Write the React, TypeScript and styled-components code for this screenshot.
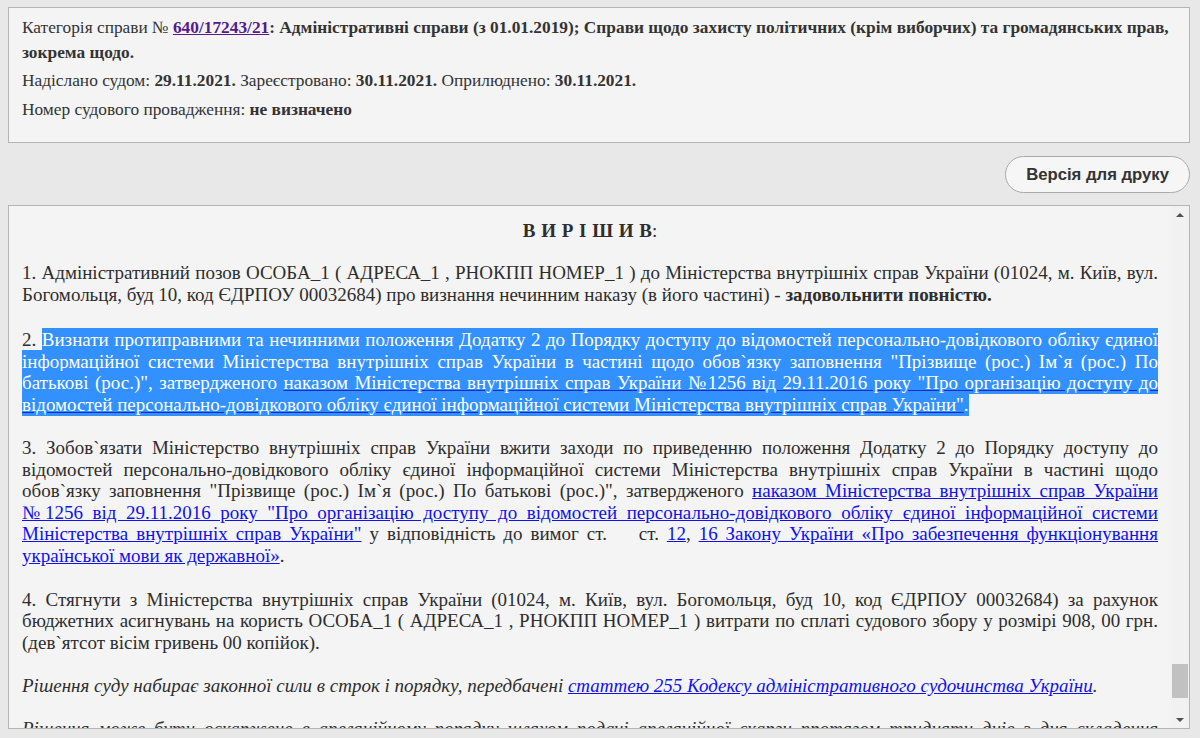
import React from 'react';
import styled, { createGlobalStyle } from 'styled-components';

const SERIF = "'Liberation Serif', 'Times New Roman', serif";
const SANS = "'Liberation Sans', Arial, sans-serif";

const GlobalStyle = createGlobalStyle`
  body {
    margin: 0;
    background: #e8e8e8;
  }
`;

const Page = styled.div`
  height: 738px;
  overflow: hidden;
  padding: 7px 10px 0 8px;
  box-sizing: border-box;
  font-family: ${() => SERIF};
  color: #333;
`;

const InfoBox = styled.div`
  height: 136px;
  box-sizing: border-box;
  border: 1px solid #b4b4b4;
  background: #f4f4f4;
  padding: 7px 13px 0 13px;
  font-family: ${() => SERIF};
  font-size: 17.33px;
`;

const InfoRow = styled.div<{ $gap?: number }>`
  line-height: 25px;
  margin-top: ${p => p.$gap || 0}px;
`;

const CaseLink = styled.a`
  color: #551a8b;
  text-decoration: underline;
  font-weight: bold;
`;

const Toolbar = styled.div`
  display: flex;
  justify-content: flex-end;
  margin: 13px 0 12px;
`;

const PrintButton = styled.button`
  height: 37px;
  padding: 0 20px;
  border: 1px solid #aaa;
  border-radius: 19px;
  background: #f6f6f6;
  color: #333;
  font-family: ${() => SANS};
  font-weight: bold;
  font-size: 16.7px;
  cursor: pointer;
`;

const DocBox = styled.div`
  height: 524px;
  box-sizing: border-box;
  border: 1px solid #b4b4b4;
  background: #f4f4f4;
  display: flex;
`;

const DocContent = styled.div`
  flex: 1;
  overflow: hidden;
  padding: 14px 13px 0 13px;
  font-family: ${() => SERIF};
  font-size: 19px;
  line-height: 21.6px;
  color: #2e2e2e;
`;

const Heading = styled.div`
  text-align: center;
  margin: 0 0 20.4px;
  word-spacing: 1px;
`;

const Para = styled.p<{ $italic?: boolean; $after?: number }>`
  margin: 0 0 ${p => p.$after || 21.6}px;
  text-align: justify;
  font-style: ${p => (p.$italic ? 'italic' : 'normal')};
`;

const Link = styled.a`
  color: #1010f0;
  text-decoration: underline;
`;

const Selected = styled.span`
  background: #3390ff;
  color: #fff;
  padding: 1px 0;
  box-decoration-break: clone;
  -webkit-box-decoration-break: clone;
  a {
    color: #fff;
    text-decoration-color: #1a2ad0;
  }
`;

const ScrollBar = styled.div`
  width: 18px;
  background: #f1f1f1;
  display: flex;
  flex-direction: column;
`;

const ArrowButton = styled.div<{ $down?: boolean }>`
  height: 17px;
  display: flex;
  align-items: center;
  justify-content: center;
  &::after {
    content: '';
    width: 0;
    height: 0;
    border-left: 4px solid transparent;
    border-right: 4px solid transparent;
    border-top: ${p => (p.$down ? '4px solid #505050' : '0')};
    border-bottom: ${p => (p.$down ? '0' : '4px solid #505050')};
  }
`;

const Track = styled.div`
  flex: 1;
  display: flex;
  flex-direction: column;
  justify-content: flex-end;
  padding: 0 1px 13px 1px;
`;

const Thumb = styled.div`
  height: 34px;
  background: #c1c1c1;
`;

function InfoPanel() {
  return (
    <InfoBox>
      <InfoRow>
        Категорія справи № <CaseLink href="#">640/17243/21</CaseLink>
        <b>
          : Адміністративні справи (з 01.01.2019); Справи щодо захисту політичних
          (крім виборчих) та громадянських прав, зокрема щодо.
        </b>
      </InfoRow>
      <InfoRow $gap={3}>
        Надіслано судом: <b>29.11.2021.</b> Зареєстровано: <b>30.11.2021.</b>{' '}
        Оприлюднено: <b>30.11.2021.</b>
      </InfoRow>
      <InfoRow $gap={4}>
        Номер судового провадження: <b>не визначено</b>
      </InfoRow>
    </InfoBox>
  );
}

function Decision() {
  return (
    <DocBox>
      <DocContent>
        <Heading>
          <b>В И Р І Ш И В</b>:
        </Heading>
        <Para $after={23.8}>
          1. Адміністративний позов ОСОБА_1 ( АДРЕСА_1 , РНОКПП НОМЕР_1 ) до
          Міністерства внутрішніх справ України (01024, м. Київ, вул. Богомольця,
          буд 10, код ЄДРПОУ 00032684) про визнання нечинним наказу (в його
          частині) - <b>задовольнити повністю.</b>
        </Para>
        <Para>
          2.{' '}
          <Selected>
            Визнати протиправними та нечинними положення Додатку 2 до Порядку
            доступу до відомостей персонально-довідкового обліку єдиної
            інформаційної системи Міністерства внутрішніх справ України в частині
            щодо обов`язку заповнення "Прізвище (рос.) Ім`я (рос.) По батькові
            (рос.)", затвердженого{' '}
            <Link href="#">
              наказом Міністерства внутрішніх справ України №1256 від 29.11.2016
              року "Про організацію доступу до відомостей персонально-довідкового
              обліку єдиної інформаційної системи Міністерства внутрішніх справ
              України"
            </Link>
            .
          </Selected>
        </Para>
        <Para $after={22.4}>
          3. Зобов`язати Міністерство внутрішніх справ України вжити заходи по
          приведенню положення Додатку 2 до Порядку доступу до відомостей
          персонально-довідкового обліку єдиної інформаційної системи
          Міністерства внутрішніх справ України в частині щодо обов`язку
          заповнення "Прізвище (рос.) Ім`я (рос.) По батькові (рос.)",
          затвердженого{' '}
          <Link href="#">
            наказом Міністерства внутрішніх справ України №1256 від 29.11.2016
            року "Про організацію доступу до відомостей персонально-довідкового
            обліку єдиної інформаційної системи Міністерства внутрішніх справ
            України"
          </Link>{' '}
          у відповідність до вимог ст.&nbsp;&nbsp;&nbsp; ст. <Link href="#">12</Link>,{' '}
          <Link href="#">
            16 Закону України «Про забезпечення функціонування української мови як
            державної»
          </Link>
          .
        </Para>
        <Para $after={21.2}>
          4. Стягнути з Міністерства внутрішніх справ України (01024, м. Київ,
          вул. Богомольця, буд 10, код ЄДРПОУ 00032684) за рахунок бюджетних
          асигнувань на користь ОСОБА_1 ( АДРЕСА_1 , РНОКПП НОМЕР_1 ) витрати по
          сплаті судового збору у розмірі 908, 00 грн. (дев`ятсот вісім гривень 00
          копійок).
        </Para>
        <Para $italic>
          Рішення суду набирає законної сили в строк і порядку, передбачені{' '}
          <Link href="#">
            статтею 255 Кодексу адміністративного судочинства України
          </Link>
          .
        </Para>
        <Para $italic>
          Рішення може бути оскаржене в апеляційному порядку шляхом подачі
          апеляційної скарги протягом тридцяти днів з дня складення повного
          тексту рішення.
        </Para>
      </DocContent>
      <ScrollBar>
        <ArrowButton />
        <Track>
          <Thumb />
        </Track>
        <ArrowButton $down />
      </ScrollBar>
    </DocBox>
  );
}

export default function App() {
  return (
    <Page>
      <GlobalStyle />
      <InfoPanel />
      <Toolbar>
        <PrintButton>Версія для друку</PrintButton>
      </Toolbar>
      <Decision />
    </Page>
  );
}
